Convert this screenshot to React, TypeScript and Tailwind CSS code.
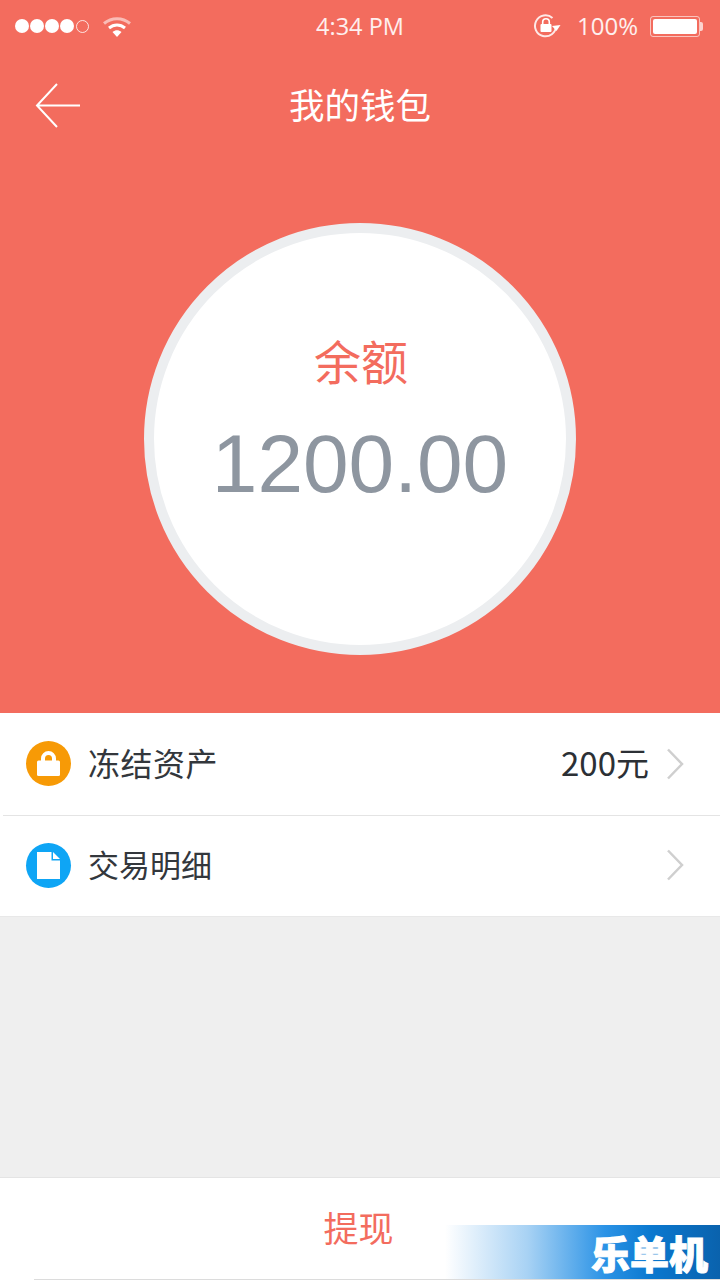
import React from 'react';

const cjk = { fontFamily: '"Noto Sans CJK SC", sans-serif' };

const StatusBar = () => (
  <div className="relative flex h-[52px] items-center justify-between pl-[15px] pr-[17px] text-white">
    <div className="flex items-center">
      <div className="flex items-center gap-[1px]">
        {[0, 1, 2, 3].map(i => (
          <span key={i} className="h-[14px] w-[14px] rounded-full bg-white" />
        ))}
        <span className="ml-[1px] h-[13px] w-[13px] rounded-full border border-white/80" />
      </div>
      <svg width="30" height="24" viewBox="0 0 30 24" className="ml-[13px]" fill="none">
        <path d="M2 9.5C9.5 3 20.5 3 28 9.5" stroke="#fff" strokeOpacity="0.55" strokeWidth="3" />
        <path d="M7 14C11.8 10 18.2 10 23 14" stroke="#fff" strokeWidth="3" />
        <path d="M10.5 18 C13.5 15.6 16.5 15.6 19.5 18 L15 23 Z" fill="#fff" />
      </svg>
    </div>
    <div
      className="absolute left-0 right-0 top-[12px] text-center text-[23.5px] leading-[28px] text-white/90"
      style={{ fontFamily: '"Open Sans", sans-serif' }}
    >
      4:34 PM
    </div>
    <div className="flex items-center">
      <svg width="28" height="26" viewBox="0 0 28 26" fill="none" className="ml-[1px]">
        <path d="M23 13a10.5 10.5 0 1 1-3.5-8" stroke="#fff" strokeOpacity="0.85" strokeWidth="2" />
        <path d="M19 13l4.5 5 4-6z" fill="#fff" />
        <rect x="7.5" y="11" width="11" height="8" rx="1" fill="#fff" />
        <path d="M9.7 11V9a3.3 3.3 0 0 1 6.6 0v2" stroke="#fff" strokeWidth="1.6" />
      </svg>
      <span
        className="ml-[16px] text-[24px] leading-[28px] text-white/90"
        style={{ fontFamily: '"Open Sans", sans-serif' }}
      >
        100%
      </span>
      <div className="ml-[12px] flex items-center">
        <div className="h-[21px] w-[50px] rounded-[3px] border border-white/60 p-[2px]">
          <div className="h-full w-full rounded-[2px] bg-white" />
        </div>
        <div className="h-[9px] w-[3px] rounded-r-[2px] bg-white/70" />
      </div>
    </div>
  </div>
);

const Chevron = ({ className }: { className?: string }) => (
  <svg width="18" height="32" viewBox="0 0 18 32" fill="none" className={className}>
    <path d="M2 1.5L16 16L2 30.5" stroke="#cfcfcf" strokeWidth="2.5" />
  </svg>
);

const LockIcon = () => (
  <div className="flex h-[45px] w-[45px] items-center justify-center rounded-full bg-[#f79a06]">
    <svg width="23" height="25" viewBox="0 0 23 25">
      <path d="M6 11V7.5a5.5 5.5 0 0 1 11 0V11" fill="none" stroke="#fff" strokeWidth="4" />
      <rect x="0" y="9.5" width="23" height="15.5" rx="1.5" fill="#fff" />
    </svg>
  </div>
);

const FileIcon = () => (
  <div className="flex h-[45px] w-[45px] items-center justify-center rounded-full bg-[#0ea5f5]">
    <svg width="23" height="27" viewBox="0 0 23 27">
      <path d="M0 0H14.5V8.5H23V27H0Z" fill="#fff" />
      <path d="M16 0L23 7H16Z" fill="#fff" />
    </svg>
  </div>
);

export default function App() {
  return (
    <div className="relative flex h-[1280px] w-[720px] flex-col overflow-hidden bg-[#efefef]" style={cjk}>
      {/* Header */}
      <div className="flex h-[713px] flex-col bg-[#f36c5e]">
        <StatusBar />
        <div className="relative flex h-[110px] items-center justify-center">
          <svg width="46" height="46" viewBox="0 0 46 46" fill="none" className="absolute left-[35px] top-[31px]">
            <path d="M22 1L2 22.5L22 44M2 22.5H45" stroke="#fff" strokeWidth="2" />
          </svg>
          <span className="mb-[6px] text-[35.5px] leading-[40px] text-white">我的钱包</span>
        </div>
        <div className="mt-[61px] flex justify-center">
          <div className="flex h-[432px] w-[432px] flex-col items-center rounded-full border-[10px] border-[#eceef0] bg-white">
            <span className="ml-[2px] mt-[98px] text-[47px] leading-[58px] text-[#f36c5e]">余额</span>
            <span
              className="mt-[29px] text-[82px] leading-[92px] text-[#8e96a0]"
              style={{ fontFamily: '"Liberation Sans", sans-serif' }}
            >
              1200.00
            </span>
          </div>
        </div>
      </div>

      {/* Rows */}
      <div className="bg-white">
        <div className="flex h-[103px] items-center border-b border-[#e4e4e4] pb-[1px] pl-[26px] pr-[36px] [border-image:linear-gradient(to_right,white_4px,#e4e4e4_4px)_1]">
          <LockIcon />
          <span className="mb-[4px] ml-[17px] text-[32px] leading-[40px] tracking-[0.5px] text-[#33373c]">冻结资产</span>
          <span className="mb-[4px] ml-auto text-[33px] leading-[40px] text-[#2c3035]">200元</span>
          <Chevron className="ml-[17px]" />
        </div>
        <div className="flex h-[101px] items-center border-b border-[#e8e8e8] pb-[2px] pl-[26px] pr-[36px]">
          <FileIcon />
          <span className="mb-[2px] ml-[17px] text-[31px] leading-[40px] text-[#33373c]">交易明细</span>
          <Chevron className="ml-auto" />
        </div>
      </div>

      <div className="flex-1" />

      {/* Bottom action */}
      <div className="flex h-[103px] items-center justify-center border-t border-[#e4e4e4] bg-white">
        <span className="mb-[5px] mr-[3px] text-[35px] leading-[44px] text-[#f36c5e]">提现</span>
      </div>
      <div className="absolute bottom-0 left-[34px] right-0 h-[1px] bg-[#dcdcdc]" />

      {/* Watermark */}
      <div className="absolute bottom-[1px] right-0 flex h-[54px] w-[275px] items-center justify-end bg-[linear-gradient(to_right,#ffffff_0%,#a8d2f4_30%,#2b93e6_58%,#0a78cf_75%,#0a62ad_100%)] pr-[12px]">
        <span className="text-[39px] font-black leading-[44px] text-white [-webkit-text-stroke:1px_white]">乐单机</span>
      </div>
    </div>
  );
}
